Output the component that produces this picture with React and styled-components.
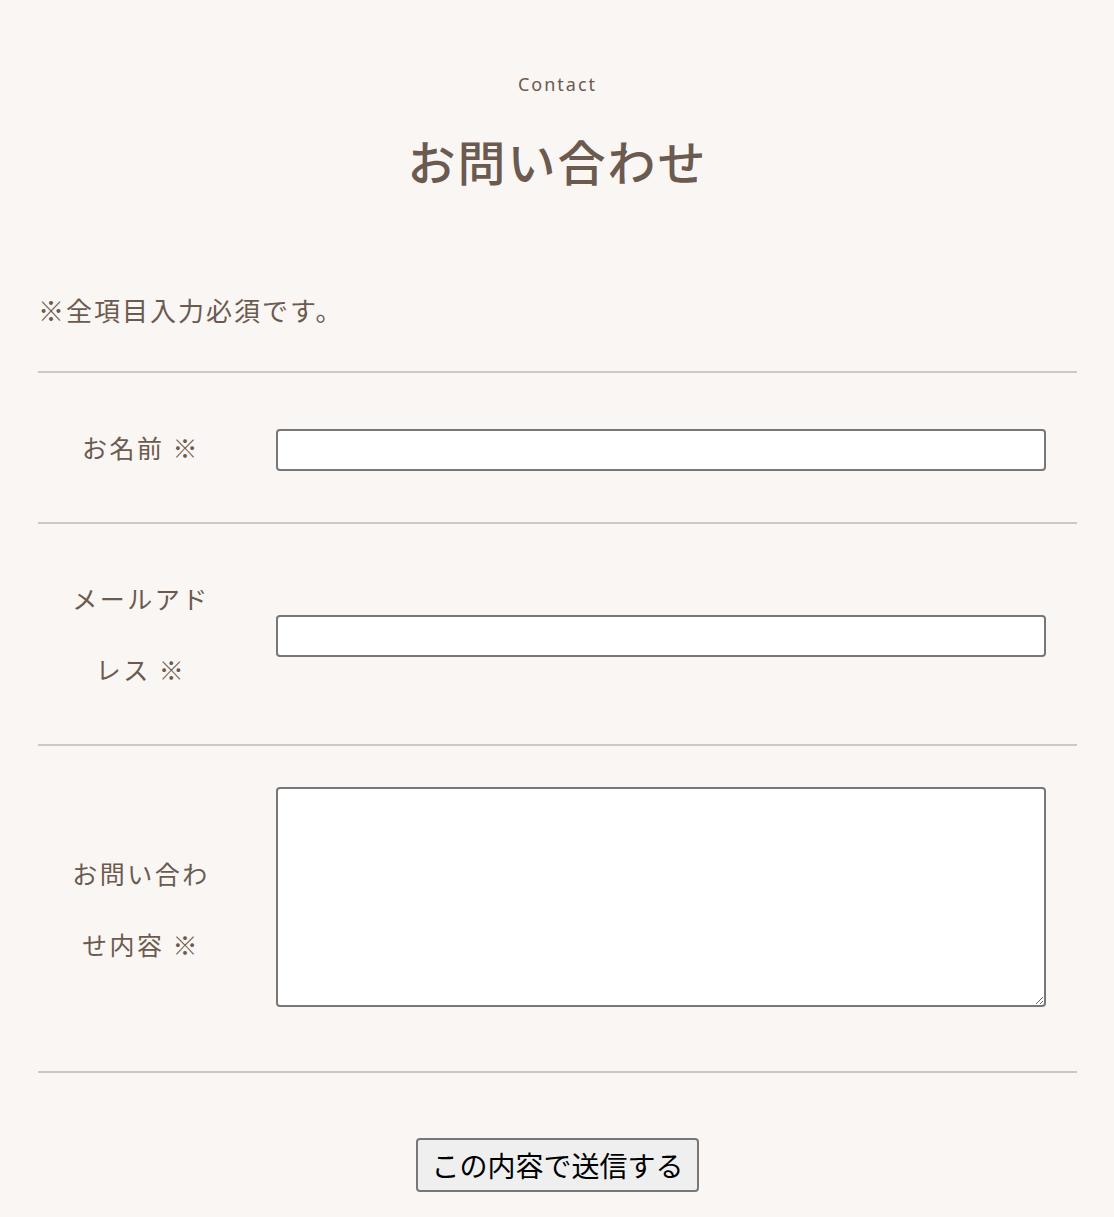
import React from "react"
import styled, { createGlobalStyle } from 'styled-components';

const GlobalStyle = createGlobalStyle`
    html, body {
        margin: 0;
        padding: 0;
        background-color: #f9f6f3;
    }
    body {
        font-family: "Noto Sans CJK JP", "Noto Sans", sans-serif;
        color: #6b5a4f;
    }
`;

const Page = styled.div`
    padding: 71px 37px 25px 38px;
`;

const Eyebrow = styled.p`
    margin: 0;
    text-align: center;
    font-family: "Noto Sans", "Noto Sans CJK JP", sans-serif;
    font-size: 18px;
    line-height: 27px;
    letter-spacing: 2px;
`;

const Title = styled.h1`
    margin: 26px 0 0;
    text-align: center;
    font-size: 48px;
    line-height: 72px;
    font-weight: 500;
    letter-spacing: 2px;
`;

const Note = styled.p`
    margin: 94px 0 0;
    font-size: 26px;
    line-height: 39px;
    letter-spacing: 2px;
`;

const Form = styled.form`
    margin-top: 42px;
    border-top: 2px solid #cdc8c3;
`;

const Row = styled.div`
    display: grid;
    grid-template-columns: 206px 1fr;
    align-items: center;
    padding: 39px 0;
    border-bottom: 2px solid #cdc8c3;
`;

const Label = styled.label`
    padding: 0 30px;
    text-align: center;
    font-size: 25px;
    line-height: 71px;
    letter-spacing: 2.5px;
`;

const Field = styled.div`
    padding: 0 31px 0 32px;
`;

const TextInput = styled.input`
    display: block;
    box-sizing: border-box;
    width: 100%;
    height: 42px;
    margin-top: 4px;
    border: 2px solid #777;
    border-radius: 4px;
    background: #fff;
    font-size: 18px;
    padding: 4px 8px;
`;

const TextArea = styled.textarea`
    display: block;
    box-sizing: border-box;
    width: 100%;
    height: 220px;
    margin: 2px 0 25px;
    border: 2px solid #777;
    border-radius: 4px;
    background: #fff;
    font-size: 18px;
    padding: 4px 8px;
`;

const Actions = styled.div`
    display: flex;
    justify-content: center;
    padding-top: 65px;
`;

const SubmitButton = styled.button`
    font-family: "Noto Sans CJK JP", sans-serif;
    font-size: 28px;
    line-height: 40px;
    padding: 5px 13px;
    color: #000;
    background: #efefef;
    border: 2px solid #777;
    border-radius: 4px;
`;

export default function App() {
    return (
        <>
            <GlobalStyle />
            <Page>
                <Eyebrow>Contact</Eyebrow>
                <Title>お問い合わせ</Title>
                <Note>※全項目入力必須です。</Note>
                <Form onSubmit={e => e.preventDefault()}>
                    <Row>
                        <Label htmlFor="name">お名前 ※</Label>
                        <Field><TextInput id="name" type="text" /></Field>
                    </Row>
                    <Row>
                        <Label htmlFor="email">メールアドレス ※</Label>
                        <Field><TextInput id="email" type="email" /></Field>
                    </Row>
                    <Row>
                        <Label htmlFor="message">お問い合わせ内容 ※</Label>
                        <Field><TextArea id="message" /></Field>
                    </Row>
                    <Actions>
                        <SubmitButton type="submit">この内容で送信する</SubmitButton>
                    </Actions>
                </Form>
            </Page>
        </>
    )
}
